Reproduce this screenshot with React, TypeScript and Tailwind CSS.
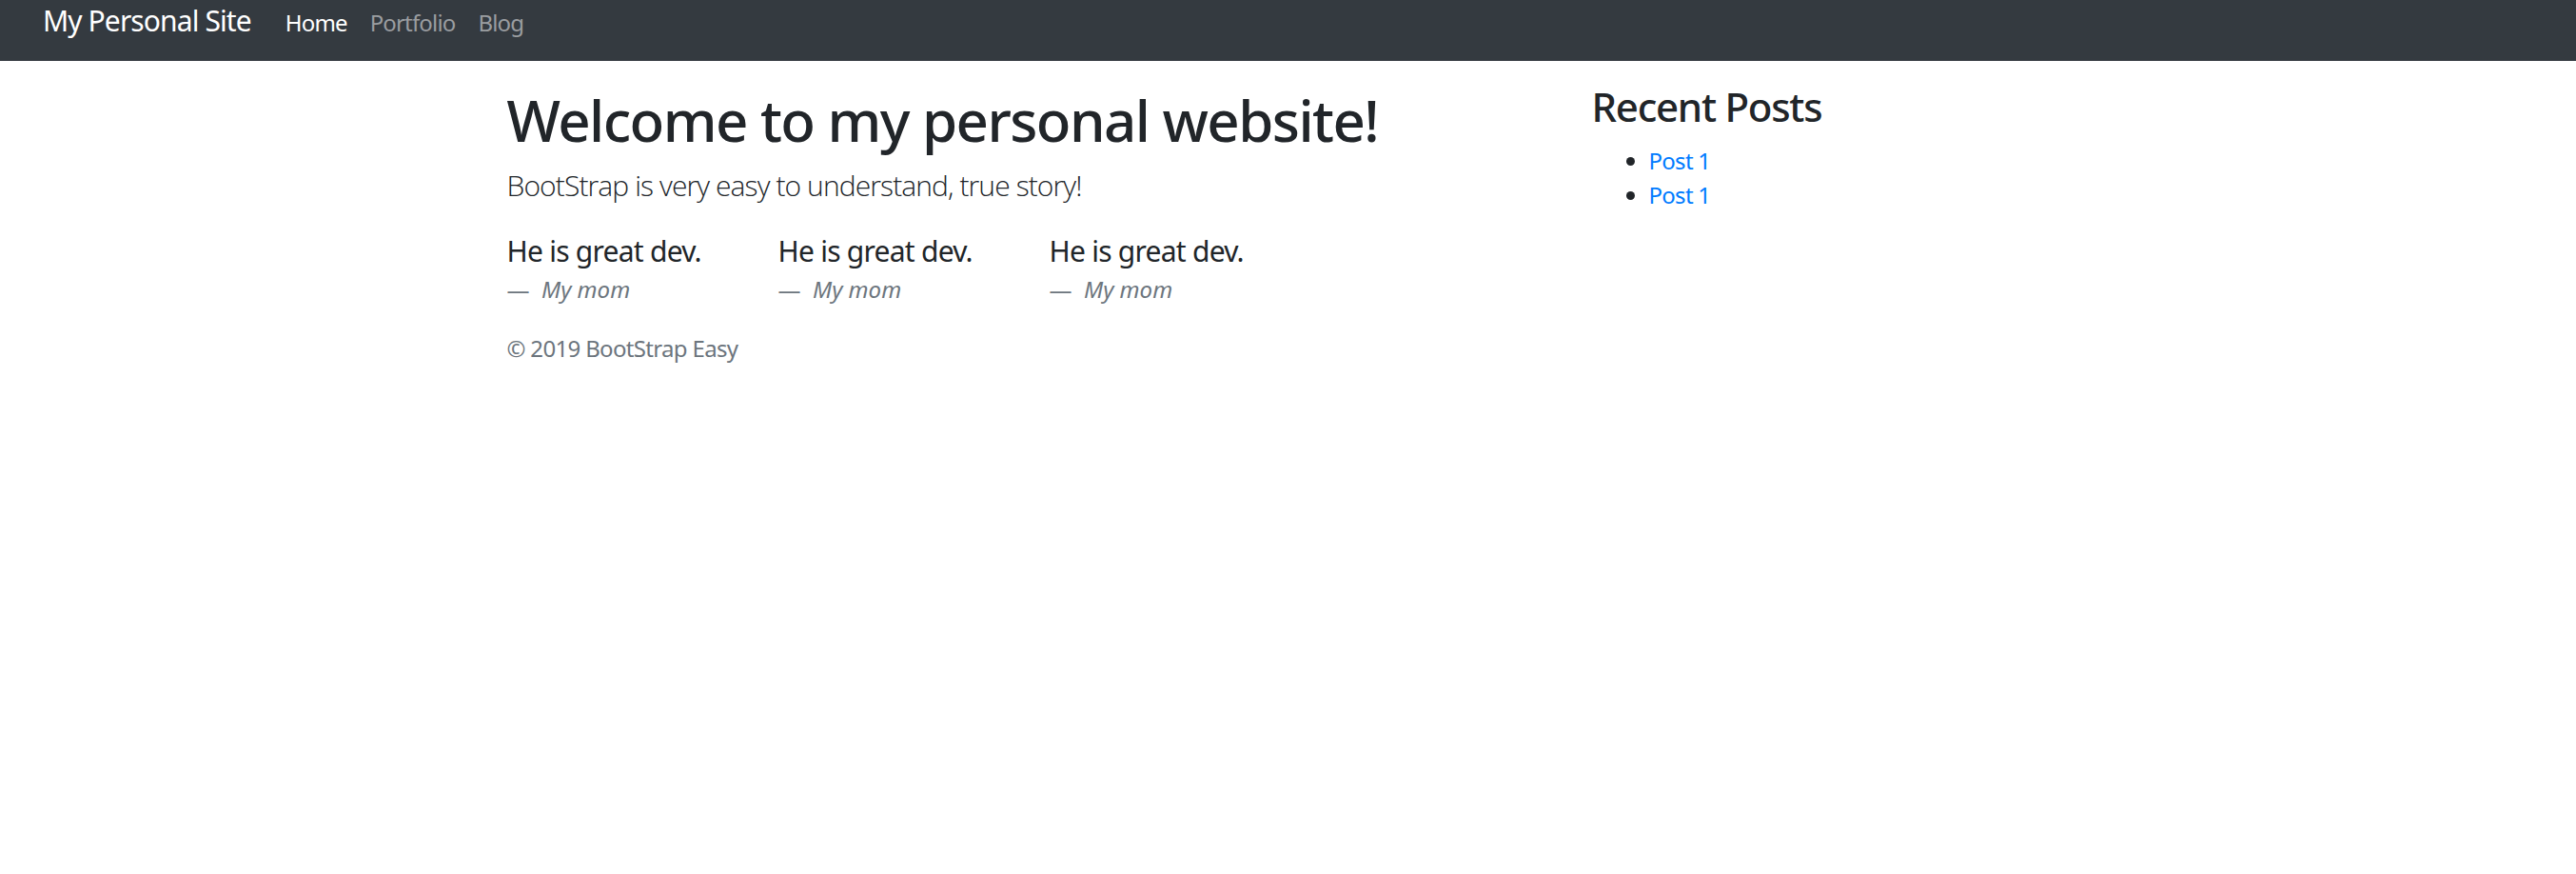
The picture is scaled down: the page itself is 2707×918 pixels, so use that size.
const font = { fontFamily: '"Noto Sans", "Open Sans", sans-serif' }
const light = { fontFamily: '"Open Sans", "Noto Sans", sans-serif' }

function Quote() {
  return (
    <blockquote className="mb-[26px]">
      <p className="text-[30px] leading-[45px] tracking-[-0.025em] text-[#212529] mb-0">He is great dev.</p>
      <footer className="text-[24px] leading-[36px] text-[#6c757d]">
        {'—\u00a0 '}
        <cite className="italic">My mom</cite>
      </footer>
    </blockquote>
  )
}

export default function App() {
  return (
    <div className="min-h-screen bg-white" style={font}>
      <nav className="h-[64px] bg-[#343a40] flex items-baseline pl-[45px]">
        <a className="text-[30px] leading-[43px] tracking-[-0.03em] text-white mr-[24px]">My Personal Site</a>
        <a className="px-[12px] text-[24px] leading-[36px] tracking-[-0.035em] text-white">Home</a>
        <a className="px-[12px] text-[24px] leading-[36px] tracking-[-0.035em] text-[#9a9da0]">Portfolio</a>
        <a className="px-[12px] text-[24px] leading-[36px] tracking-[-0.035em] text-[#9a9da0]">Blog</a>
      </nav>

      <main className="mx-auto w-[1686px] px-[22px] pt-[26px] grid grid-cols-[1095px_1fr] gap-x-[45px]">
        <section>
          <h1 className="text-[60px] leading-[72px] font-medium tracking-[-0.026em] text-[#212529] mb-[10px]">
            Welcome to my personal website!
          </h1>
          <p className="text-[30px] leading-[45px] font-light tracking-[-0.03em] text-[#212529] mb-[24px]" style={light}>
            BootStrap is very easy to understand, true story!
          </p>
          <div className="grid grid-cols-[285px_285px_285px]">
            <Quote />
            <Quote />
            <Quote />
          </div>
          <p className="text-[24px] leading-[36px] tracking-[-0.028em] text-[#6c757d]">© 2019 BootStrap Easy</p>
        </section>

        <aside>
          <h3 className="text-[42px] leading-[44px] font-medium tracking-[-0.03em] text-[#212529] mb-[17px]">
            Recent Posts
          </h3>
          <ul className="list-disc pl-[60px] text-[24px] leading-[36px] text-[#212529]">
            <li><a className="text-[#007bff] tracking-[-0.03em]">Post 1</a></li>
            <li><a className="text-[#007bff] tracking-[-0.03em]">Post 1</a></li>
          </ul>
        </aside>
      </main>
    </div>
  )
}
